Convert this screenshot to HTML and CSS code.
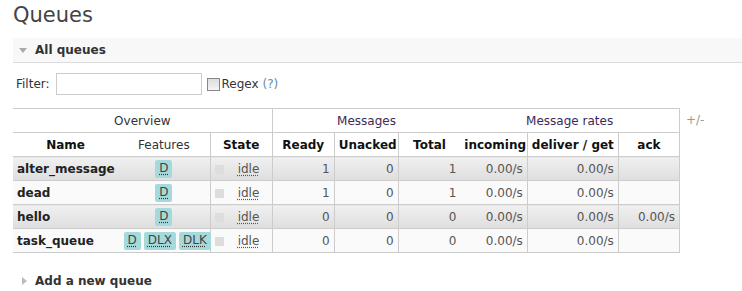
FILE: index.html
```html
<!DOCTYPE html>
<html>
<head>
<meta charset="utf-8">
<link rel="stylesheet" href="styles.css">
</head>
<body>
<div class="main">
  <h1>Queues</h1>
  <div class="section">
    <div class="section-h open"><span class="tri down"></span>All queues</div>
    <div class="filter">
      <label>Filter:</label>
      <input type="text" class="filter-input">
      <span class="cb"></span>
      <span class="regex">Regex <span class="help">(?)</span></span>
    </div>
    <div class="table-wrap">
      <table class="list">
        <colgroup>
          <col class="c-name"><col class="c-feat"><col class="c-state">
          <col class="c-ready"><col class="c-unack"><col class="c-total">
          <col class="c-inc"><col class="c-del"><col class="c-ack">
        </colgroup>
        <thead>
          <tr class="group">
            <th colspan="3" class="br">Overview</th>
            <th colspan="3">Messages</th>
            <th colspan="3" class="br">Message rates</th>
          </tr>
          <tr class="cols">
            <th class="bold">Name</th>
            <th class="br">Features</th>
            <th class="bold br">State</th>
            <th class="bold br">Ready</th>
            <th class="bold br">Unacked</th>
            <th class="bold">Total</th>
            <th class="bold br">incoming</th>
            <th class="bold br">deliver / get</th>
            <th class="bold br">ack</th>
          </tr>
        </thead>
        <tbody>
          <tr class="odd">
            <td class="name">alter_message</td>
            <td class="feat br"><abbr class="badge">D</abbr></td>
            <td class="state br"><span class="sq"></span><abbr class="idle">idle</abbr></td>
            <td class="num br">1</td>
            <td class="num br">0</td>
            <td class="num">1</td>
            <td class="num br">0.00/s</td>
            <td class="num br">0.00/s</td>
            <td class="num br"></td>
          </tr>
          <tr class="even">
            <td class="name">dead</td>
            <td class="feat br"><abbr class="badge">D</abbr></td>
            <td class="state br"><span class="sq"></span><abbr class="idle">idle</abbr></td>
            <td class="num br">1</td>
            <td class="num br">0</td>
            <td class="num">1</td>
            <td class="num br">0.00/s</td>
            <td class="num br">0.00/s</td>
            <td class="num br"></td>
          </tr>
          <tr class="odd">
            <td class="name">hello</td>
            <td class="feat br"><abbr class="badge">D</abbr></td>
            <td class="state br"><span class="sq"></span><abbr class="idle">idle</abbr></td>
            <td class="num br">0</td>
            <td class="num br">0</td>
            <td class="num">0</td>
            <td class="num br">0.00/s</td>
            <td class="num br">0.00/s</td>
            <td class="num br">0.00/s</td>
          </tr>
          <tr class="even">
            <td class="name">task_queue</td>
            <td class="feat br"><abbr class="badge">D</abbr><abbr class="badge">DLX</abbr><abbr class="badge">DLK</abbr></td>
            <td class="state br"><span class="sq"></span><abbr class="idle">idle</abbr></td>
            <td class="num br">0</td>
            <td class="num br">0</td>
            <td class="num">0</td>
            <td class="num br">0.00/s</td>
            <td class="num br">0.00/s</td>
            <td class="num br"></td>
          </tr>
        </tbody>
      </table>
      <span class="plusminus">+/-</span>
    </div>
  </div>
  <div class="section">
    <div class="section-h closed"><span class="tri right"></span>Add a new queue</div>
  </div>
</div>
</body>
</html>
```

FILE: styles.css
```css
html, body {
  margin: 0;
  padding: 0;
  background: #fff;
}
body {
  font-family: "DejaVu Sans", Verdana, sans-serif;
  font-size: 12px;
  color: #484848;
}
.main {
  padding-left: 13px;
}
h1 {
  margin: 0;
  height: 38px;
  font-size: 21px;
  font-weight: normal;
  line-height: 30px;
  color: #444;
}
.section-h {
  height: 24px;
  line-height: 24px;
  font-weight: bold;
  color: #333;
  display: flex;
  align-items: center;
}
.section-h.open {
  background: #f8f8f8;
  border-bottom: 1px solid #ddd;
}
.tri {
  display: inline-block;
  width: 0;
  height: 0;
  margin-right: 8px;
}
.tri.down {
  margin-left: 6px;
  border-left: 4px solid transparent;
  border-right: 4px solid transparent;
  border-top: 5px solid #aaa;
}
.tri.right {
  margin-left: 9px;
  border-top: 4px solid transparent;
  border-bottom: 4px solid transparent;
  border-left: 5px solid #bbb;
  margin-right: 8px;
}
.filter {
  display: flex;
  align-items: center;
  height: 22px;
  margin-top: 10px;
  padding-left: 3px;
  color: #333;
}
.filter label {
  margin-right: 6px;
}
.filter-input {
  width: 146px;
  height: 22px;
  box-sizing: border-box;
  border: 1px solid #ccc;
  margin: 0 5px 0 0;
  padding: 0;
}
.cb {
  width: 11px;
  height: 11px;
  border: 1px solid #888;
  background: linear-gradient(#ddd, #f4f4f4);
  margin-right: 2px;
}
.help {
  color: #6688aa;
}
.table-wrap {
  display: flex;
  align-items: flex-start;
  margin-top: 13px;
}
table.list {
  border-collapse: collapse;
  table-layout: fixed;
  width: 667px;
}
.c-name { width: 105px; }
.c-feat { width: 92px; }
.c-state { width: 62px; }
.c-ready { width: 62px; }
.c-unack { width: 64px; }
.c-total { width: 62px; }
.c-inc { width: 67px; }
.c-del { width: 91px; }
.c-ack { width: 61px; }
table.list th, table.list td {
  height: 24px;
  padding: 0 4px;
  border-top: 1px solid #ccc;
  border-bottom: 1px solid #ccc;
  white-space: nowrap;
  box-sizing: border-box;
}
table.list th {
  font-weight: normal;
  color: #333;
  text-align: center;
  background: #fff;
}
table.list tr.group th:nth-child(2),
table.list tr.group th:nth-child(3) {
  color: #3a2a5a;
}
table.list th.bold {
  font-weight: bold;
  color: #111;
}
.br {
  border-right: 1px solid #ccc;
}
tr.odd td {
  background: linear-gradient(#f0f0f0, #dedede);
}
tr.even td {
  background: #fafafa;
}
td.name {
  font-weight: bold;
  color: #222;
}
td.feat {
  text-align: center;
  padding: 0 2px;
}
.badge {
  display: inline-block;
  background: #a6dada;
  color: #444;
  border-radius: 2px;
  padding: 2px 4px 3px;
  line-height: 13px;
  margin: 0 1.5px;
  text-decoration: underline dotted #333;
  text-underline-offset: 2px;
}
td.state {
  padding: 0 4px 0 5px;
}
.sq {
  display: inline-block;
  width: 9px;
  height: 9px;
  background: #ddd;
  vertical-align: middle;
  margin-right: 14px;
}
.idle {
  text-decoration: underline dotted #555;
  text-underline-offset: 2px;
  color: #555;
}
td.num {
  text-align: right;
  color: #555;
}
.plusminus {
  color: #999;
  margin: 5px 0 0 6px;
}
.section-h.closed {
  margin-top: 16px;
}
```
